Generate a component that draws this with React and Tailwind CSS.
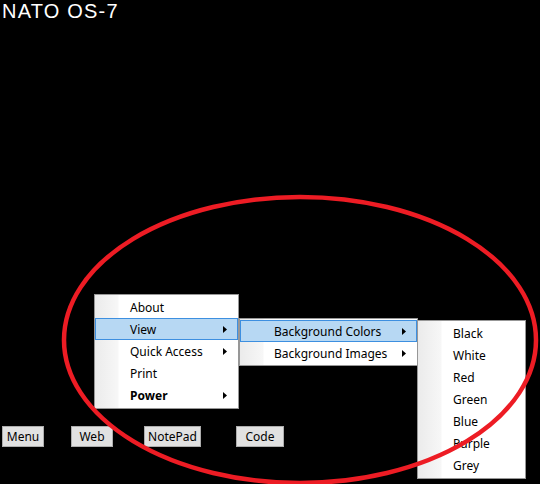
import React from "react";

function Arrow() {
  return (
    <svg width="4" height="7" viewBox="0 0 4 7" className="block">
      <polygon points="0,0 4,3.5 0,7" fill="#000" />
    </svg>
  );
}

function Item({ label, active, sub, bold, pl = "pl-[34px]" }) {
  return (
    <div
      className={
        "h-[22px] flex items-center justify-between pr-[10px] border " +
        pl +
        " " +
        (active ? "bg-[#b7d8f3] border-[#3d8fe0]" : "border-transparent")
      }
    >
      <span className={"pt-[1px] " + (bold ? "font-bold" : "")}>{label}</span>
      {sub ? <Arrow /> : null}
    </div>
  );
}

const gutter =
  "bg-[linear-gradient(90deg,#ebebeb_0px,#f7f7f7_23px,#ffffff_24px)]";

export default function App() {
  return (
    <div
      className="relative w-[540px] h-[484px] bg-black overflow-hidden flex flex-col"
      style={{ fontFamily: '"Noto Sans", "Open Sans", sans-serif' }}
    >
      <div
        className="text-white text-[20px] leading-none pt-[1px] pl-[2px] tracking-[1.2px]"
        style={{ fontFamily: '"Liberation Sans", Arial, sans-serif' }}
      >
        NATO OS-7
      </div>

      <div className="mt-auto mb-[37px] flex items-start text-[12px] text-black">
        <button className="ml-[2px] w-[42px] h-[21px] bg-[#e1e1e1] border border-[#adadad] leading-none">
          Menu
        </button>
        <button className="ml-[27px] w-[42px] h-[21px] bg-[#e1e1e1] border border-[#adadad] leading-none">
          Web
        </button>
        <button className="ml-[31px] w-[57px] h-[21px] bg-[#e1e1e1] border border-[#adadad] leading-none">
          NotePad
        </button>
        <button className="ml-[35px] w-[48px] h-[21px] bg-[#e1e1e1] border border-[#adadad] leading-none">
          Code
        </button>
      </div>

      {/* Main menu */}
      <div
        className={
          "absolute left-[94px] top-[294px] w-[145px] h-[115px] border border-[#979797] pt-[1px] text-[12px] text-black " +
          gutter
        }
      >
        <Item label="About" />
        <Item label="View" active sub />
        <Item label="Quick Access" sub />
        <Item label="Print" />
        <Item label="Power" sub bold />
      </div>

      {/* Submenu 1 */}
      <div
        className={
          "absolute left-[239px] top-[318px] w-[179px] h-[48px] border border-[#979797] pt-[1px] text-[12px] text-black " +
          gutter
        }
      >
        <Item label="Background Colors" active sub pl="pl-[33px]" />
        <Item label="Background Images" sub pl="pl-[33px]" />
      </div>

      {/* Submenu 2 */}
      <div
        className={
          "absolute left-[417px] top-[320px] w-[109px] h-[159px] border border-[#979797] pt-[1px] text-[12px] text-black " +
          gutter
        }
      >
        <Item label="Black" />
        <Item label="White" />
        <Item label="Red" />
        <Item label="Green" />
        <Item label="Blue" />
        <Item label="Purple" />
        <Item label="Grey" />
      </div>

      <svg
        className="absolute left-0 top-0 pointer-events-none"
        width="540"
        height="484"
        viewBox="0 0 540 484"
      >
        <ellipse
          cx="300"
          cy="340"
          rx="236"
          ry="143"
          fill="none"
          stroke="#ed1c24"
          strokeWidth="4.5"
        />
      </svg>
    </div>
  );
}
